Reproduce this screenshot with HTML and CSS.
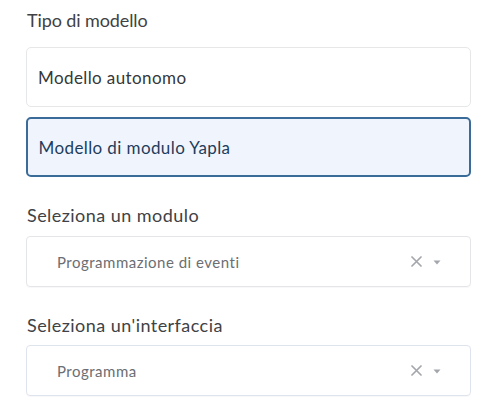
FILE: index.html
```html
<!DOCTYPE html>
<html lang="it">
<head>
<meta charset="utf-8">
<link rel="stylesheet" href="styles.css">
</head>
<body>
<div class="form">
  <div class="label first">Tipo di modello</div>
  <div class="option">Modello autonomo</div>
  <div class="option selected">Modello di modulo Yapla</div>

  <div class="label">Seleziona un modulo</div>
  <div class="select">
    <span class="value">Programmazione di eventi</span>
    <span class="icons">
      <svg class="clear" width="11" height="11" viewBox="0 0 11 11"><path d="M1 1 L10 10 M10 1 L1 10" stroke="#a3a6ab" stroke-width="1.7" stroke-linecap="round"/></svg>
      <svg class="caret" width="8" height="5" viewBox="0 0 8 5"><path d="M0.5 0.5 H7.5 L4 4.5 Z" fill="#a3a6ab"/></svg>
    </span>
  </div>

  <div class="label">Seleziona un'interfaccia</div>
  <div class="select alt">
    <span class="value">Programma</span>
    <span class="icons">
      <svg class="clear" width="11" height="11" viewBox="0 0 11 11"><path d="M1 1 L10 10 M10 1 L1 10" stroke="#a3a6ab" stroke-width="1.7" stroke-linecap="round"/></svg>
      <svg class="caret" width="8" height="5" viewBox="0 0 8 5"><path d="M0.5 0.5 H7.5 L4 4.5 Z" fill="#a3a6ab"/></svg>
    </span>
  </div>
</div>
</body>
</html>
```
FILE: styles.css
```css
html, body {
  margin: 0;
  padding: 0;
  background: #ffffff;
}
body {
  font-family: "Lato", "Noto Sans", sans-serif;
  width: 501px;
  height: 419px;
  overflow: hidden;
}
.form {
  display: flex;
  flex-direction: column;
  padding: 0 30px 0 26px;
}
.label {
  font-size: 18px;
  line-height: 24px;
  letter-spacing: 0.45px;
  color: #404245;
  margin: 26px 0 9px 1px;
}
.label.first {
  margin: 8px 0 15px 1px;
  letter-spacing: -0.1px;
}
.option {
  height: 60px;
  box-sizing: border-box;
  border: 1.5px solid #e6e7e9;
  border-radius: 5px;
  display: flex;
  align-items: center;
  padding-left: 11px;
  font-size: 17px;
  letter-spacing: 0.4px;
  color: #35373a;
}
.option.selected {
  margin-top: 10px;
  border: 2px solid #3b6c99;
  background: #f0f5fd;
  color: #1e3d5c;
  padding-left: 10.5px;
}
.select {
  height: 51px;
  box-sizing: border-box;
  border: 1px solid #e4e5e8;
  border-radius: 4px;
  display: flex;
  align-items: center;
  padding-left: 30px;
  padding-right: 29px;
  font-size: 15px;
  letter-spacing: 0.5px;
  color: #6b6e73;
  box-shadow: 0 1px 1px rgba(0,0,0,0.03);
}
.select.alt {
  border-color: #dfe3ee;
  margin-top: -1px;
}
.value {
  flex: 1;
}
.icons {
  display: flex;
  align-items: center;
  gap: 11px;
}
.clear {
  display: block;
}
.caret {
  display: block;
  margin-top: 1px;
}
```
